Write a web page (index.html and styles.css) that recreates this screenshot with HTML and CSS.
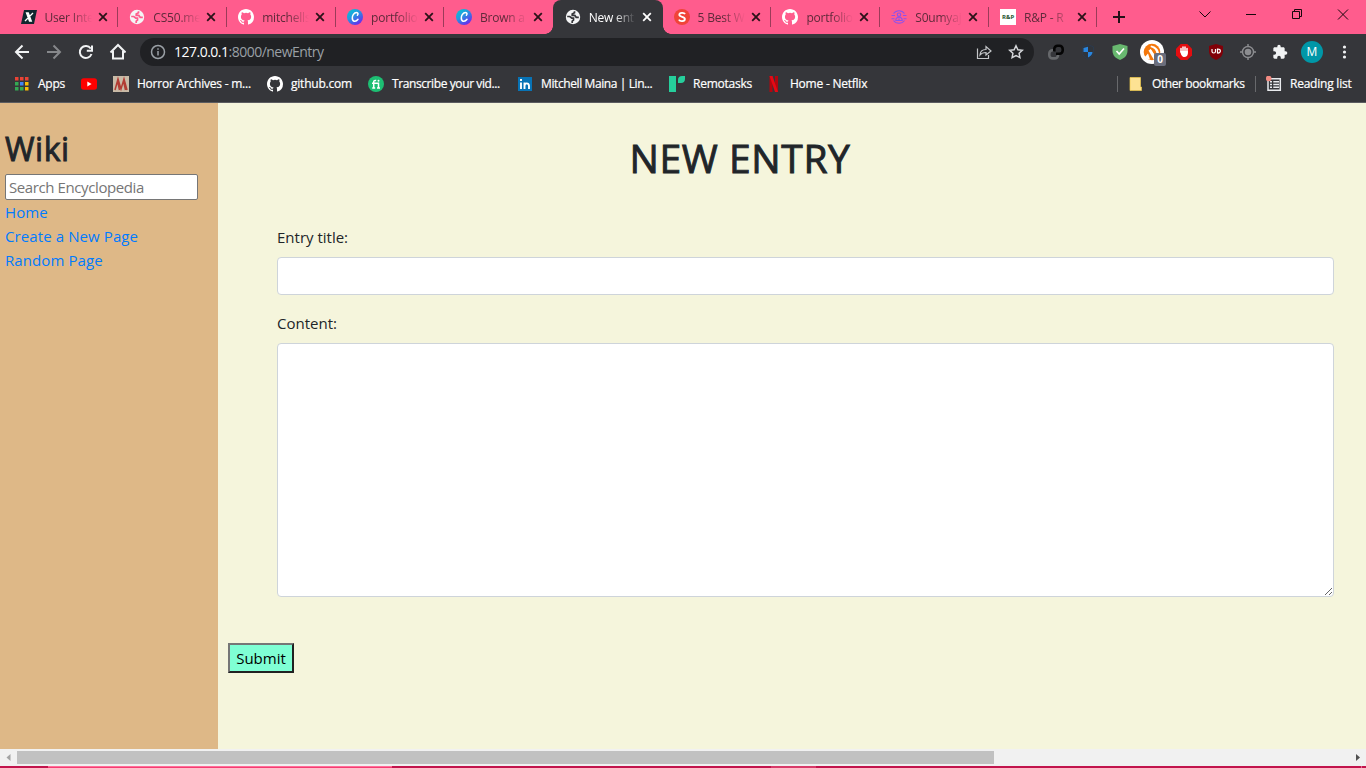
FILE: index.html
```html
<!DOCTYPE html>
<html lang="en">
<head>
<meta charset="utf-8">
<title>New entry</title>
<link rel="stylesheet" href="styles.css">
</head>
<body>
<svg class="defs" width="0" height="0" aria-hidden="true">
  <symbol id="x" viewBox="0 0 10 10"><path d="M1.2 1.2l7.6 7.6M8.8 1.2L1.2 8.8" stroke="currentColor" stroke-width="1.8"/></symbol>
  <symbol id="github" viewBox="0 0 16 16"><path fill="#fff" d="M8 0C3.58 0 0 3.58 0 8c0 3.54 2.29 6.53 5.47 7.59.4.07.55-.17.55-.38 0-.19-.01-.82-.01-1.49-2.01.37-2.53-.49-2.69-.94-.09-.23-.48-.94-.82-1.13-.28-.15-.68-.52-.01-.53.63-.01 1.08.58 1.23.82.72 1.21 1.87.87 2.33.66.07-.52.28-.87.51-1.07-1.78-.2-3.64-.89-3.64-3.95 0-.87.31-1.59.82-2.15-.08-.2-.36-1.02.08-2.12 0 0 .67-.21 2.2.82a7.6 7.6 0 014 0c1.53-1.04 2.2-.82 2.2-.82.44 1.1.16 1.92.08 2.12.51.56.82 1.27.82 2.15 0 3.07-1.87 3.75-3.65 3.95.29.25.54.73.54 1.48 0 1.07-.01 1.93-.01 2.2 0 .21.15.46.55.38A8.01 8.01 0 0016 8c0-4.42-3.58-8-8-8z"/></symbol>
  <symbol id="globe" viewBox="0 0 16 16"><circle cx="8" cy="8" r="7.2" fill="#f4f5f6"/><path d="M2.200 7.500h2.600l2 1.600h1.700v2l-1.300 1v1.800M9.500 2.300v1.500L7.200 5v1.400h2.600l1.400 1.900h2.600" fill="none" stroke="var(--land)" stroke-width="1.700"/></symbol>
  <linearGradient id="cg" x1="0" y1="0" x2=".7" y2="1"><stop offset="0" stop-color="#00cbd0"/><stop offset=".45" stop-color="#239be0"/><stop offset="1" stop-color="#6b27ef"/></linearGradient>
  <symbol id="canva" viewBox="0 0 16 16"><circle cx="8" cy="8" r="8" fill="url(#cg)"/><path d="M10.400 6.300c1-1 .8-2.800-.9-2.800-2.500 0-4.300 3.200-4.200 5.600.1 3.700 3.500 4.200 5.700 1.200" fill="none" stroke="#fff" stroke-width="1.500" stroke-linecap="round"/></symbol>
</svg>
<div class="window">
  <div class="tabstrip">
    <div class="tabs">
      <div class="tab"><svg viewBox="0 0 16 16"><path d="M3 1h13l-3 14H0z" fill="#10272f"/><path d="M5.500 4h1.800l3 8H8.500zM12 4l-8 8" fill="#fff" stroke="#fff" stroke-width="1.300"/></svg><span>User Inte</span><svg class="close"><use href="#x"/></svg></div>
      <div class="tab"><svg><use href="#globe"/></svg><span>CS50.me</span><svg class="close"><use href="#x"/></svg></div>
      <div class="tab"><svg><use href="#github"/></svg><span>mitchells</span><svg class="close"><use href="#x"/></svg></div>
      <div class="tab"><svg><use href="#canva"/></svg><span>portfolio</span><svg class="close"><use href="#x"/></svg></div>
      <div class="tab last-before"><svg><use href="#canva"/></svg><span>Brown a</span><svg class="close"><use href="#x"/></svg></div>
      <div class="tab active"><svg><use href="#globe"/></svg><span>New ent</span><svg class="close"><use href="#x"/></svg></div>
      <div class="tab"><svg viewBox="0 0 16 16"><circle cx="8" cy="8" r="8" fill="#f04438"/><path d="M11 5.200C10.200 3.300 5.300 3.400 5.300 5.800c0 2.500 5.600 1.600 5.600 4.200 0 2.700-5 2.800-6 .6" fill="none" stroke="#fff" stroke-width="1.800"/></svg><span>5 Best W</span><svg class="close"><use href="#x"/></svg></div>
      <div class="tab"><svg><use href="#github"/></svg><span>portfolio</span><svg class="close"><use href="#x"/></svg></div>
      <div class="tab"><svg viewBox="0 0 16 16" fill="none" stroke="#8b51ee" stroke-width="1.100"><path d="M2.500 4.500a6.800 6.800 0 0111 0M2.500 11.500a6.800 6.800 0 0011 0M.5 6.500H4M12 6.500h3.500M.5 9.700h3M12.500 9.700h3"/><circle cx="8" cy="5.700" r="1.700"/><path d="M4.800 11.500c0-4.300 6.400-4.300 6.400 0zM8 9.500v2"/></svg><span>S0umyaj</span><svg class="close"><use href="#x"/></svg></div>
      <div class="tab"><b class="rp">R&amp;P</b><span>R&amp;P - R</span><svg class="close"><use href="#x"/></svg></div>
    </div>
    <svg class="plus" viewBox="0 0 12 12"><path d="M6 0v12M0 6h12" stroke="#241118" stroke-width="2"/></svg>
    <svg class="controls" viewBox="0 0 166 34" fill="none" stroke="#16070c"><path d="M4.500 11.500l5.500 5.500 5.500-5.500M51 14.500h10M97.500 11.500h7v7h-7zM99.500 11v-1.500h7v7h-1.500M143 9.500l10 10M153 9.500l-10 10"/></svg>
  </div>
  <div class="toolbar">
    <svg class="nav" viewBox="0 0 126 36" fill="none" stroke="#f1f3f4" stroke-width="2"><path d="M29 18H16M22.500 11.500L16 18l6.500 6.500"/><path stroke="#86888b" d="M47 18h13M53.500 11.500L60 18l-6.500 6.500"/><path d="M90.700 14.500a6 6 0 10.8 5.500M92 11.500v5.200h-5.200"/><path d="M113 17v7.500h10V17M110.500 18.500L118 11l7.500 7.500" /></svg>
    <div class="omnibox">
      <svg class="info" viewBox="0 0 16 16" fill="none" stroke="#9aa0a6" stroke-width="1.500"><circle cx="8" cy="8" r="6.500"/><path d="M8 7v4.500M8 4.300v1.500"/></svg>
      <span class="url"><b>127.0.0.1</b>:8000/newEntry</span>
      <svg class="share" viewBox="0 0 16 16" fill="none" stroke="#c4c6c9" stroke-width="1.200"><path d="M1.500 4.500v10h11V11M4 11c.2-4 2.500-5.500 6-5.500v-3L15 7l-5 4V8.500C7 8.500 5.500 9 4 11z"/></svg>
      <svg class="star" viewBox="0 0 16 16" fill="none" stroke="#d5d7da" stroke-width="1.500"><path d="M8 1.800l1.900 4 4.400.5-3.200 3 .8 4.300L8 11.500l-3.900 2.100.8-4.300-3.200-3 4.400-.5z"/></svg>
    </div>
    <div class="extensions">
      <svg viewBox="0 0 16 16" fill="none" stroke-width="2.600"><path stroke="#66686b" d="M6 6.300H4.500A3.200 3.200 0 001.300 9.500v1.700a3.200 3.200 0 003.200 3.200h2.300A3.200 3.200 0 0010 11.200V9.500"/><path stroke="#050505" d="M6.300 7.500V5A3.200 3.200 0 019.500 1.800h2A3.200 3.200 0 0114.700 5v1.500a3.200 3.200 0 01-3.200 3.200H8"/></svg>
      <svg viewBox="0 0 16 16"><path d="M8 .8l5.500 2V8c0 3.500-2.500 5.800-5.500 7.200C5 13.800 2.500 11.500 2.500 8V2.800z" fill="#30353c" stroke="#293e55" stroke-width=".7"/><path d="M3.500 4L8 2.800V8H3.500zM8 8h4.500c0 2.500-2 4.200-4.500 5.500z" fill="#2886e0"/></svg>
      <svg viewBox="0 0 16 16"><path d="M8 0l7.500 2v5c0 4.500-3.500 7.500-7.500 9C4 14.500.5 11.500.5 7V2z" fill="#68b86f"/><path d="M4.500 7l2.700 3L12 4.500" fill="none" stroke="#fff" stroke-width="1.700"/></svg>
      <div class="avast"><svg viewBox="0 0 24 24"><circle cx="12" cy="12" r="12" fill="#fff"/><circle cx="12" cy="12" r="8.300" fill="#f5780c"/><path d="M4 18l4-4.500 2 6M8.500 10.500l2.500-1 6 9-3 1.500zM11 5.500c5 1 8 4 8 8.500l-2.500-.5c-.5-3.500-2.500-5.500-6-6.500z" fill="#fff"/><path d="M10 9.500l5 8" stroke="#fff" stroke-width="1.500"/></svg><i>0</i></div>
      <svg viewBox="0 0 16 16"><path d="M4.700 0h6.600L16 4.700v6.600L11.300 16H4.700L0 11.300V4.700z" fill="#e40d10"/><path d="M5 8V4.500M7 8V3M9 8V3M11 9V4.500" stroke="#fff" stroke-width="1.500" stroke-linecap="round"/><path d="M4.300 7h7.500v2.500c0 2-1.300 3.500-3.500 3.500-2.500 0-3.500-2.500-4-6z" fill="#fff"/></svg>
      <svg viewBox="0 0 16 16"><path d="M8 0l7 2v5c0 4.500-3 7.500-7 9-4-1.500-7-4.500-7-9V2z" fill="#810008"/><path d="M4 5v2.500c0 2 3.500 2 3.500 0V5M9.500 5v4c3.800.4 3.800-4.300 0-4z" fill="none" stroke="#fff" stroke-width="1.200"/></svg>
      <svg viewBox="0 0 16 16" fill="none" stroke="#8c8d90" stroke-width="1.400"><circle cx="8" cy="8" r="5.500"/><path d="M8 0v3M8 13v3M0 8h3M13 8h3"/><circle cx="8" cy="8" r="3.300" fill="#8c8d90" stroke="none"/></svg>
      <svg viewBox="0 0 24 24"><path fill="#f1f3f4" d="M20.500 11H19V7c0-1.100-.9-2-2-2h-4V3.500a2.500 2.500 0 00-5 0V5H4c-1.100 0-2 .9-2 2v3.800h1.500a2.700 2.700 0 010 5.400H2V20c0 1.100.9 2 2 2h3.800v-1.500a2.700 2.700 0 015.400 0V22H17c1.100 0 2-.9 2-2v-4h1.500a2.500 2.500 0 000-5z"/></svg>
      <span class="avatar">M</span>
      <svg viewBox="0 0 16 16" fill="#f1f3f4"><circle cx="8.500" cy="3" r="1.600"/><circle cx="8.500" cy="8" r="1.600"/><circle cx="8.500" cy="13" r="1.600"/></svg>
    </div>
  </div>
  <div class="bookmarks">
    <div class="marks">
      <a><svg viewBox="0 0 16 16"><path d="M1 1h3.500v3.500H1zM6 1h3.500v3.500H6zM11 1h3.500v3.500H11z" fill="#ea4335"/><path d="M1 6h3.500v3.500H1z" fill="#34a853"/><path d="M6 6h3.500v3.500H6z" fill="#4285f4"/><path d="M11 6h3.500v3.500H11zM11 11h3.500v3.500H11z" fill="#fbbc05"/><path d="M1 11h3.500v3.500H1zM6 11h3.500v3.500H6z" fill="#34a853"/></svg><span>Apps</span></a>
      <a><svg viewBox="0 0 16 16"><rect y="2.200" width="16" height="11.600" rx="2.700" fill="#f00"/><path d="M6.300 5.500v5l4.300-2.500z" fill="#fff"/></svg></a>
      <a><svg viewBox="0 0 16 16"><path fill="#c9bba7" d="M0 0h16v16H0z"/><path d="M2 14L5 3l3 10 3-10 3 11M4.500 5l2 9M10.500 5l2 9" fill="none" stroke="#b23c33" stroke-width="1.500"/></svg><span>Horror Archives - m...</span></a>
      <a><svg><use href="#github"/></svg><span>github.com</span></a>
      <a class="tight"><svg viewBox="0 0 16 16"><circle cx="8" cy="8" r="8" fill="#1dbf73"/><path d="M5.700 12V6c0-1.500 1-1.700 2.500-1.600M4 7.300h6.500V12M4.200 12h3M9 12h3" fill="none" stroke="#fff" stroke-width="1.500"/><circle cx="10.500" cy="4.800" r="1" fill="#fff"/></svg><span>Transcribe your vid...</span></a>
      <a class="tight"><svg viewBox="0 0 16 16"><path fill="#0873b5" d="M1 1h14v14H1z"/><path d="M4 6.500V13M4 3v2M7.500 13V6.500M7.500 10c0-3.300 4.500-3.600 4.500 0v3" fill="none" stroke="#fff" stroke-width="1.900"/></svg><span>Mitchell Maina | Lin...</span></a>
      <a><svg viewBox="0 0 16 16" fill="#26cf9c"><path d="M0 0h7v16H0zM9 7V4c0-2.500 1.500-4 4-4h3v3c0 2.500-1.500 4-4 4z"/></svg><span>Remotasks</span></a>
      <a><svg viewBox="0 0 16 16"><path d="M3.500 0h3v16h-3zM9 0h3v16H9z" fill="#b1060f"/><path d="M3.500 0h3L12 16H9z" fill="#e50914"/></svg><span>Home - Netflix</span></a>
    </div>
    <div class="right">
      <a class="other"><svg viewBox="0 0 16 16"><path d="M2 1.500h10.500v9.500h1V14.500H2z" fill="#fde293" stroke="#f0cb4c" stroke-width=".7"/></svg><span>Other bookmarks</span></a>
      <a class="reading"><svg viewBox="0 0 16 16" fill="none" stroke="#e8eaed" stroke-width="1.500"><path d="M2 2.700h12.300v11.600H2zM4 5.700h2M7.300 5.700H13M4 8.500h2M7.300 8.500H13M4 11.300h2M7.300 11.300H13"/><circle cx="2.700" cy="2.500" r="2.800" fill="#f28b82" stroke="none"/></svg><span>Reading list</span></a>
    </div>
  </div>
  <div class="page">
    <aside class="sidebar">
      <h2>Wiki</h2>
      <input class="search" type="text" placeholder="Search Encyclopedia">
      <a>Home</a>
      <a>Create a New Page</a>
      <a>Random Page</a>
    </aside>
    <main class="main">
      <h1>NEW ENTRY</h1>
      <form class="entry">
        <label>Entry title:</label>
        <input class="field" type="text">
        <label>Content:</label>
        <textarea class="field area"></textarea>
      </form>
      <button class="submit" type="button">Submit</button>
    </main>
  </div>
  <div class="scrollbar">
    <svg viewBox="0 0 17 17"><path d="M10.500 5v7L6.500 8.500z" fill="#a3a3a3"/></svg>
    <div class="track"><div class="thumb"></div></div>
    <svg viewBox="0 0 17 17"><path d="M7 5v7l4-3.500z" fill="#505050"/></svg>
  </div>
  <div class="taskbar"><i class="t1"></i><i class="t2"></i><i class="t3"></i></div>
</div>
</body>
</html>
```
FILE: styles.css
```css
* { box-sizing: border-box; }
body { margin: 0; overflow: hidden; font-family: "Open Sans", "Noto Sans", sans-serif; }
svg { display: block; flex: none; }
.defs { position: absolute; }
.window { width: 1366px; height: 768px; display: flex; flex-direction: column; overflow: hidden; }

.tabstrip { height: 34px; background: #ff5c8d; display: flex; align-items: center; padding-left: 9px; }
.tabs { display: flex; height: 34px; }
.tab { --land: #ff5c8d; width: 108.850px; height: 34px; display: flex; align-items: center; padding-left: 11.500px; color: #2b1219; position: relative; }
.tab svg, .rp { width: 16px; height: 16px; }
.tab span { width: 48px; margin-left: 8px; font-size: 12px; letter-spacing: -.2px; white-space: nowrap; color: #5f2a3a; -webkit-mask-image: linear-gradient(90deg, #000 52%, transparent 98%); mask-image: linear-gradient(90deg, #000 52%, transparent 98%); }
.tab .close { width: 10px; height: 10px; margin-left: 5px; }
.tab::after { content: ""; width: 1px; height: 20px; background: #9b3b59; margin-left: auto; }
.tab.last-before::after { display: none; }
.tab.active { --land: #35363a; background: #35363a; border-radius: 8px 8px 0 0; color: #fff; width: 109.850px; margin-right: -1px; }
.tab.active span { color: #fff; }
.tab.active::after { position: absolute; left: 100%; bottom: 0; width: 8px; height: 8px; background: radial-gradient(circle at 100% 0, transparent 7.500px, #35363a 8px); }
.tab.active::before { content: ""; position: absolute; right: 100%; bottom: 0; width: 8px; height: 8px; background: radial-gradient(circle at 0 0, transparent 7.500px, #35363a 8px); }
.rp { background: #fff; color: #24512e; font-size: 6px; line-height: 16px; text-align: center; }
.plus { width: 12px; height: 12px; margin-left: 15.500px; }
.controls { width: 166px; height: 34px; margin-left: auto; margin-right: 5px; }

.toolbar { height: 36px; background: #35363a; display: flex; align-items: center; }
.nav { width: 126px; height: 36px; }
.omnibox { width: 894px; height: 28px; margin-left: 14px; border-radius: 14px; background: #202124; display: flex; align-items: center; padding: 0 10px; }
.info { width: 16px; height: 16px; }
.url { font-size: 14px; line-height: 20px; letter-spacing: -.510px; color: #9aa0a6; margin: 0 0 1px 8px; }
.url b { color: #fff; font-weight: 400; }
.share { width: 16px; height: 16px; margin-left: auto; }
.star { width: 16px; height: 16px; margin-left: 16px; }
.extensions { display: grid; grid-template-columns: repeat(10, 32px); align-items: center; justify-items: center; margin-left: 6px; }
.extensions > svg { width: 16px; height: 16px; }
.avast { position: relative; width: 24px; height: 24px; }
.avast i { position: absolute; left: 14px; top: 13px; width: 12px; height: 13px; border-radius: 2px; background: #6b6e7c; color: #fff; font: bold 10px/13px "Open Sans", sans-serif; text-align: center; }
.avatar { width: 22px; height: 22px; border-radius: 50%; background: #0097a7; color: #fff; font-size: 12px; line-height: 22px; text-align: center; }

.bookmarks { height: 33px; background: #35363a; border-bottom: 1px solid #5b5c60; display: flex; justify-content: space-between; padding: 0 0 4px 14px; color: #fff; font-size: 12px; letter-spacing: -.230px; -webkit-text-stroke: .2px #fff; }
.marks { display: grid; grid-template-columns: 67px 32px 154px 101px 149px 152px 97px 110px; }
.bookmarks a { display: flex; align-items: center; gap: 8px; white-space: nowrap; }
.bookmarks svg { width: 16px; height: 16px; }
.bookmarks span { line-height: 16px; margin-bottom: 1px; }
.bookmarks .tight { letter-spacing: -.400px; }
.right { display: flex; align-items: center; }
.right a { height: 16px; border-left: 1px solid #68696c; }
.other { width: 138px; padding-left: 10px; letter-spacing: -.400px; }
.reading { width: 111px; padding-left: 10px; }

.page { flex: 1; display: flex; min-height: 0; color: #212529; font-size: 15px; line-height: 24px; }
.sidebar { width: 218px; background: #deb887; padding: 26px 5px 0; display: flex; flex-direction: column; align-items: flex-start; }
h1, h2 { margin: 0; font-weight: 400; -webkit-text-stroke: .9px #212529; }
h2 { font-size: 32px; height: 45px; line-height: 39px; letter-spacing: .5px; }
.search { width: 193px; height: 26px; border: 1px solid #767676; border-radius: 2px; padding: 0 3px; font: 15px "Open Sans", sans-serif; letter-spacing: -.400px; background: #fff; }
.search::placeholder { color: #757575; }
.sidebar a { color: #007bff; letter-spacing: .1px; }
.main { flex: 1; background: #f5f5dc; padding: 31px 32px 0 10px; display: flex; flex-direction: column; align-items: flex-start; }
h1 { font-size: 39px; line-height: 48px; letter-spacing: .600px; align-self: stretch; text-align: center; margin-right: 82px; }
.entry { display: flex; flex-direction: column; align-self: stretch; padding: 43px 0 0 49px; }
.field { display: block; width: 100%; height: 38px; border: 1px solid #ced4da; border-radius: 4px; background: #fff; margin: 8px 0 16px; }
.area { height: 254px; resize: vertical; margin-bottom: 0; }
.submit { width: 66px; height: 30px; margin-top: 46px; padding: 0; border: 2px solid; border-color: #767676 #212121 #212121 #767676; background: #7fffd4; color: #000; font: 15px/24px "Open Sans", sans-serif; }

.scrollbar { height: 17px; background: #f1f1f1; display: flex; }
.scrollbar svg { width: 17px; height: 17px; }
.track { flex: 1; padding: 2px 0; }
.thumb { width: 977px; height: 13px; background: #c1c1c1; }
.taskbar { height: 2px; background: #c2144c; display: flex; }
.t1 { width: 344px; margin-left: 48px; background: #f43d72; border-top: 1px solid #ff6e98; }
.t2 { width: 45px; margin-left: 379px; background: #d83b69; }
.t3 { width: 1px; margin-left: auto; margin-right: 4px; background: #e36c90; }
```
